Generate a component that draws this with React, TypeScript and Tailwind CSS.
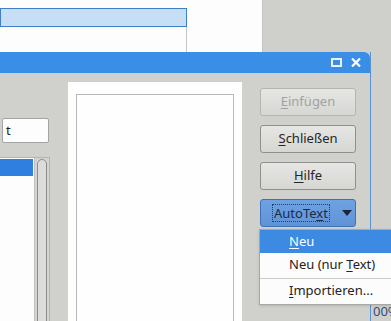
const font = { fontFamily: '"Noto Sans", "Open Sans", sans-serif' };

const Btn = ({
  mn,
  rest,
  disabled = false,
}: {
  mn: string;
  rest: string;
  disabled?: boolean;
}) => (
  <div
    className={`shrink-0 h-[28px] w-[96px] rounded-[3px] border flex items-center justify-center text-[13px]
      bg-gradient-to-b from-[#e6e6e4] to-[#d6d6d3]
      ${disabled ? "border-[#b4b4b1] text-[#a2a2a0]" : "border-[#8f8f8c] text-[#262626]"}`}
  >
    <span>
      <span className="underline underline-offset-2">{mn}</span>
      {rest}
    </span>
  </div>
);

const App = () => {
  return (
    <div
      className="relative w-[391px] h-[321px] overflow-hidden bg-[#cfcfcc]"
      style={font}
    >
      {/* background window */}
      <div className="flex h-[52px]">
        <div className="w-[262px] bg-[#fdfdfd] pt-[8px] flex">
          <div className="w-[187px] flex flex-col">
            <div className="h-[19px] bg-[#c6dff7] border border-[#3f7fc8]" />
            <div className="flex-1 border-r border-[#c6c6c6]" />
          </div>
        </div>
        <div className="flex-1 bg-[#cfcfcc] border-l border-[#c4c4c1]" />
      </div>

      {/* zoom label of the window behind */}
      <div className="absolute left-[373px] top-[302px] text-[13px] leading-[18px] text-[#2f4d7d] whitespace-nowrap">
        00%
      </div>

      {/* dialog */}
      <div className="absolute left-0 top-[52px] w-[371px] h-[280px] flex flex-col border-r border-[#5b93d0]">
        <div className="shrink-0 h-[21px] bg-[#3a8ee6] rounded-tr-[6px] flex items-center justify-end gap-[9px] pr-[9px]">
          <svg width="11" height="9" viewBox="0 0 11 9">
            <rect x="1" y="1" width="9" height="7" fill="none" stroke="#fff" strokeWidth="1.8" />
          </svg>
          <svg width="10" height="9" viewBox="0 0 10 9">
            <path d="M1 0.5 L9 8.5 M9 0.5 L1 8.5" stroke="#fff" strokeWidth="2.2" />
          </svg>
        </div>

        <div className="flex-1 min-h-0 overflow-hidden bg-[#d0d0cd] flex">
          {/* left column */}
          <div className="w-[50px] shrink-0 flex flex-col">
            <div className="shrink-0 mt-[45px] ml-[2px] h-[25px] w-[47px] bg-[#fdfdfd] border border-[#a4a4a2] rounded-[2px] flex items-center pl-[3px] text-[13px] text-[#222]">
              t
            </div>
            <div className="mt-[14px] flex-1 min-h-0 w-[50px] border-t border-r border-[#b4b4b1] flex">
              <div className="w-[34px] bg-[#fdfdfd] pt-[1px]">
                <div className="h-[17px] w-[33px] bg-[#2f7fe0]" />
              </div>
              <div className="flex-1 bg-[#d4d4d1] border-l border-[#c0c0bd] pl-[2px] pt-[1px]">
                <div className="w-[10px] h-full rounded-t-full border border-[#8c8c8a] bg-[#dcdcda]" />
              </div>
            </div>
          </div>

          {/* preview */}
          <div className="shrink-0 ml-[18px] mt-[9px] w-[174px] bg-[#fefefe] px-[8px] pt-[12px]">
            <div className="h-full border border-[#b9b9b7]" />
          </div>

          {/* buttons */}
          <div className="shrink-0 ml-[18px] pt-[15px] flex flex-col gap-[9px]">
            <Btn mn="E" rest="infügen" disabled />
            <Btn mn="S" rest="chließen" />
            <Btn mn="H" rest="ilfe" />
            <div className="shrink-0 h-[28px] w-[96px] rounded-[3px] border border-[#3e72b8] bg-gradient-to-b from-[#6fa2e2] to-[#5f93d6] flex items-center pl-[11px] text-[13px] text-[#1b2b44]">
              <span className="border border-dotted border-[#2a3c5a] px-[1px] leading-[16px]">
                AutoTe<span className="underline underline-offset-2">x</span>t
              </span>
              <svg className="ml-[12px]" width="10" height="6" viewBox="0 0 10 6">
                <path d="M0 0 H10 L5 6 Z" fill="#1c2638" />
              </svg>
            </div>
          </div>
        </div>
      </div>

      {/* dropdown menu */}
      <div className="absolute left-[259px] top-[229px] w-[150px] h-[76px] bg-[#fcfcfc] border border-[#a8a8a6] shadow-sm text-[13px] text-[#232323] flex flex-col">
        <div className="h-[23px] bg-[#3d8ae2] text-white flex items-center pl-[29px]">
          <span>
            <span className="underline underline-offset-2">N</span>eu
          </span>
        </div>
        <div className="h-[23px] flex items-center pl-[29px]">
          <span>
            Neu (nur <span className="underline underline-offset-2">T</span>ext)
          </span>
        </div>
        <div className="mt-[2px] h-px bg-[#cbcbc9]" />
        <div className="h-[24px] flex items-center pl-[29px]">
          <span>
            <span className="underline underline-offset-2">I</span>mportieren...
          </span>
        </div>
      </div>
    </div>
  );
};

export default App;
